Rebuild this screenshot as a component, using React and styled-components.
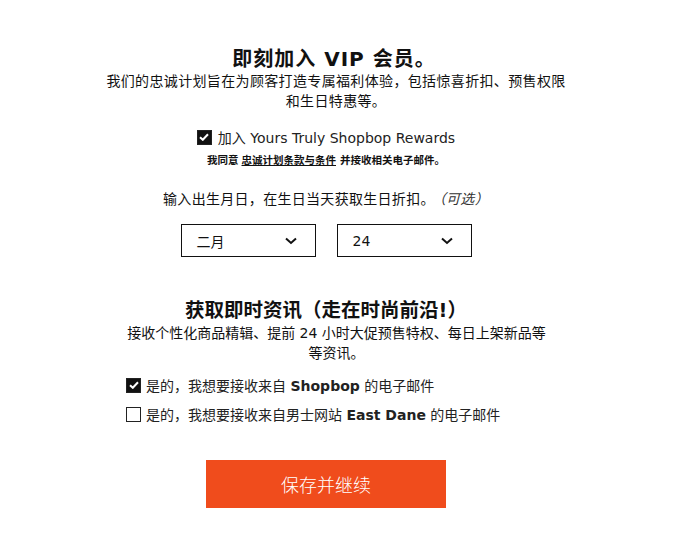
import React from "react";
import styled, { createGlobalStyle } from "styled-components";

const GlobalStyle = createGlobalStyle`
  html, body {
    margin: 0;
    padding: 0;
    background: #fff;
  }
  body {
    font-family: "DejaVu Sans", "Noto Sans CJK SC", sans-serif;
    color: #111;
  }
`;

const Page = styled.div`
  width: 684px;
  height: 536px;
  padding-top: 47px;
  box-sizing: border-box;
`;

const Column = styled.div`
  width: 480px;
  margin-left: 86px;
  display: flex;
  flex-direction: column;
  align-items: center;
`;

const Title = styled.h2`
  margin: ${(p) => p.$top || 0}px 0 0 ${(p) => p.$shift || 0}px;
  font-size: ${(p) => p.$size || 19.5}px;
  line-height: 24px;
  letter-spacing: ${(p) => p.$spacing || 0}px;
  font-weight: bold;
  text-align: center;
  color: #111;
`;

const Lead = styled.p`
  margin: 0;
  width: ${(p) => p.$width}px;
  margin-left: ${(p) => p.$shift || 0}px;
  font-size: 14px;
  line-height: 20px;
  letter-spacing: ${(p) => p.$spacing || 0}px;
  text-align: center;
  color: #111;
`;

const CheckRow = styled.label`
  display: flex;
  align-items: center;
  gap: ${(p) => p.$gap || 5}px;
  height: 20px;
  font-size: 14px;
  color: #222;
  margin-top: ${(p) => p.$top || 0}px;

  b {
    font-weight: bold;
  }
`;

const Box = styled.span`
  width: 15px;
  height: 15px;
  box-sizing: border-box;
  flex-shrink: 0;
  display: flex;
  align-items: center;
  justify-content: center;
  background: ${(p) => (p.$checked ? "#111" : "#fff")};
  border: 1.5px solid #222;
`;

const Terms = styled.div`
  margin-top: 6px;
  font-size: 10.5px;
  line-height: 14px;
  font-weight: bold;
  color: #111;

  a {
    color: #111;
    text-decoration: underline;
    margin-left: 3px;
    padding-right: 4px;
  }
`;

const Hint = styled.p`
  margin: 22px 0 0;
  font-size: 14px;
  line-height: 20px;
  letter-spacing: 0.3px;
  color: #111;

  i {
    font-style: italic;
    color: #333;
    margin-left: 4px;
  }
`;

const Selects = styled.div`
  display: flex;
  gap: 21px;
  margin-top: 15px;
`;

const Select = styled.div`
  width: 135px;
  height: 33px;
  box-sizing: border-box;
  border: 1px solid #111;
  display: flex;
  align-items: center;
  justify-content: space-between;
  padding: 0 18px 0 15px;
  font-size: 14px;
  color: #111;
`;

const Options = styled.div`
  align-self: flex-start;
  margin-left: 40px;
  margin-top: 12px;
  display: flex;
  flex-direction: column;
  align-items: flex-start;
  gap: 9px;
`;

const SaveButton = styled.button`
  margin-top: 36px;
  width: 240px;
  height: 48px;
  border: none;
  background: #f04c1c;
  color: #fff;
  font-family: "Noto Sans CJK SC", sans-serif;
  font-size: 18px;
  font-weight: 300;
  cursor: pointer;
`;

const Check = () => (
  <svg width="10" height="8" viewBox="0 0 10 8">
    <polyline
      points="1,4.2 3.8,6.8 9,1.2"
      fill="none"
      stroke="#fff"
      strokeWidth="2"
    />
  </svg>
);

const Chevron = () => (
  <svg width="12" height="8" viewBox="0 0 12 8">
    <polyline
      points="1,1.5 6,6 11,1.5"
      fill="none"
      stroke="#111"
      strokeWidth="2"
    />
  </svg>
);

const Checkbox = ({ checked }) => (
  <Box $checked={checked}>{checked && <Check />}</Box>
);

export default function App() {
  return (
    <Page>
      <GlobalStyle />
      <Column>
        <Title $shift={16} $size={20} $spacing={1}>
          即刻加入 VIP 会员。
        </Title>
        <Lead $width={464} $shift={20} $spacing={0.35}>
          我们的忠诚计划旨在为顾客打造专属福利体验，包括惊喜折扣、预售权限和生日特惠等。
        </Lead>

        <CheckRow $top={16} $gap={6}>
          <Checkbox checked />
          <span>加入 Yours Truly Shopbop Rewards</span>
        </CheckRow>
        <Terms>
          我同意<a href="#">忠诚计划条款与条件</a>并接收相关电子邮件。
        </Terms>

        <Hint>
          输入出生月日，在生日当天获取生日折扣。<i>（可选）</i>
        </Hint>
        <Selects>
          <Select>
            <span>二月</span>
            <Chevron />
          </Select>
          <Select>
            <span>24</span>
            <Chevron />
          </Select>
        </Selects>

        <Title $top={42}>获取即时资讯（走在时尚前沿!）</Title>
        <Lead $width={424} $shift={21}>
          接收个性化商品精辑、提前 24 小时大促预售特权、每日上架新品等等资讯。
        </Lead>

        <Options>
          <CheckRow>
            <Checkbox checked />
            <span>
              是的，我想要接收来自 <b>Shopbop</b> 的电子邮件
            </span>
          </CheckRow>
          <CheckRow>
            <Checkbox />
            <span>
              是的，我想要接收来自男士网站 <b>East Dane</b> 的电子邮件
            </span>
          </CheckRow>
        </Options>

        <SaveButton>保存并继续</SaveButton>
      </Column>
    </Page>
  );
}
